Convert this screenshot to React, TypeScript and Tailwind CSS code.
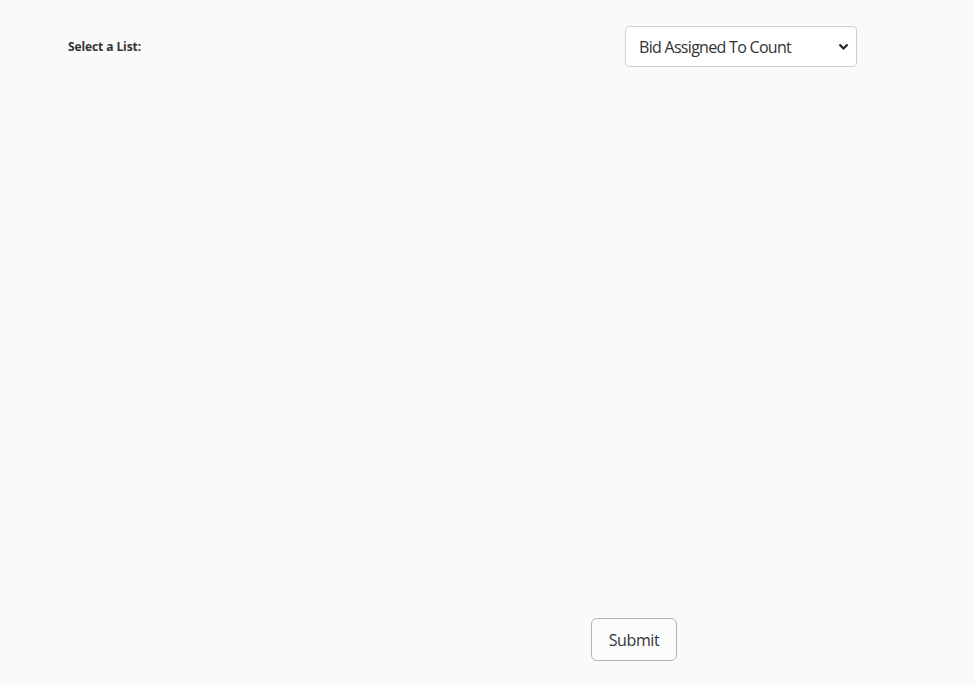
export default function App() {
  return (
    <div
      className="min-h-screen bg-[#fafafa] flex flex-col text-[#333]"
      style={{ fontFamily: '"Open Sans", "Noto Sans", sans-serif' }}
    >
      <div className="flex items-center justify-between pl-[68px] pr-[118px] pt-[26px]">
        <label htmlFor="list" className="text-[12px] font-bold tracking-[-0.1px] text-[#333]">
          Select a List:
        </label>
        <div className="relative">
          <select
            id="list"
            defaultValue="bid"
            className="appearance-none w-[232px] h-[41px] rounded-[4px] border border-[#cfcfcf] bg-white pl-[13px] pr-8 text-[16px] tracking-[-0.7px] text-[#333] outline-none"
          >
            <option value="bid">Bid Assigned To Count</option>
          </select>
          <svg
            className="pointer-events-none absolute right-[8px] top-[16px]"
            width="11"
            height="9"
            viewBox="0 0 11 9"
          >
            <path d="M1.5 2.5 L5.5 6.5 L9.5 2.5" fill="none" stroke="#222" strokeWidth="2.2" />
          </svg>
        </div>
      </div>
      <div className="mt-auto mb-[24px] pl-[591px]">
        <button
          type="submit"
          className="w-[86px] h-[43px] rounded-[6px] border border-[#a9b8a9] bg-[#fcfcfc] text-[16px] tracking-[-0.4px] text-[#333]"
        >
          Submit
        </button>
      </div>
    </div>
  );
}
